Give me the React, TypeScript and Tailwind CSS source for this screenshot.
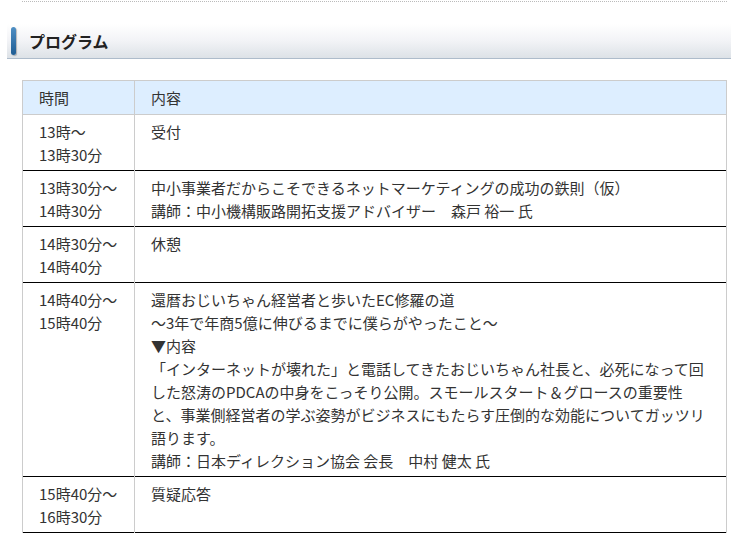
const rows: { time: string[]; content: string[] }[] = [
  { time: ["13時～", "13時30分"], content: ["受付"] },
  {
    time: ["13時30分～", "14時30分"],
    content: [
      "中小事業者だからこそできるネットマーケティングの成功の鉄則（仮）",
      "講師：中小機構販路開拓支援アドバイザー　森戸 裕一 氏",
    ],
  },
  { time: ["14時30分～", "14時40分"], content: ["休憩"] },
  {
    time: ["14時40分～", "15時40分"],
    content: [
      "還暦おじいちゃん経営者と歩いたEC修羅の道",
      "～3年で年商5億に伸びるまでに僕らがやったこと～",
      "▼内容",
      "「インターネットが壊れた」と電話してきたおじいちゃん社長と、必死になって回",
      "した怒涛のPDCAの中身をこっそり公開。スモールスタート＆グロースの重要性",
      "と、事業側経営者の学ぶ姿勢がビジネスにもたらす圧倒的な効能についてガッツリ",
      "語ります。",
      "講師：日本ディレクション協会 会長　中村 健太 氏",
    ],
  },
  { time: ["15時40分～", "16時30分"], content: ["質疑応答"] },
]

export default function App() {
  return (
    <div
      className="w-[731px] h-[540px] overflow-hidden bg-white text-[#333] text-[15px] leading-[23px]"
      style={{ fontFamily: '"Noto Sans CJK JP", "Noto Sans", sans-serif' }}
    >
      <div className="ml-[22px] mr-[4px] mt-px border-t border-dotted border-[#bbb]" />

      {/* section heading */}
      <div className="ml-[7px] mt-[22px] h-[35px] flex items-center bg-gradient-to-b from-white via-[#f2f3f6] to-[#dde2e7] border-b border-[#aebccb]">
        <div className="ml-[4px] w-[5px] h-[28px] rounded-sm bg-gradient-to-b from-[#4f8fc4] to-[#1e5d94] shadow-[1px_1px_1px_rgba(0,0,0,0.25)]" />
        <h2 className="ml-[13px] text-[16px] font-bold text-[#222]">プログラム</h2>
      </div>

      <table className="ml-[22px] mt-[21px] w-[705px] border-collapse">
        <thead>
          <tr className="bg-[#ddeeff]">
            <th className="w-[112px] h-[34px] border border-[#ccc] pl-[16px] text-left font-normal">時間</th>
            <th className="border border-[#ccc] pl-[16px] text-left font-normal">内容</th>
          </tr>
        </thead>
        <tbody>
          {rows.map((row, i) => (
            <tr key={i} className="border-b border-b-black">
              <td className="align-top border-x border-[#ccc] pl-[16px] pt-[5px] pb-[4px] whitespace-nowrap">
                {row.time.map((t, j) => (
                  <div key={j}>{t}</div>
                ))}
              </td>
              <td className="align-top border-x border-[#ccc] pl-[16px] pt-[5px] pb-[4px] whitespace-nowrap">
                {row.content.map((c, j) => (
                  <div key={j}>{c}</div>
                ))}
              </td>
            </tr>
          ))}
        </tbody>
      </table>
    </div>
  )
}
